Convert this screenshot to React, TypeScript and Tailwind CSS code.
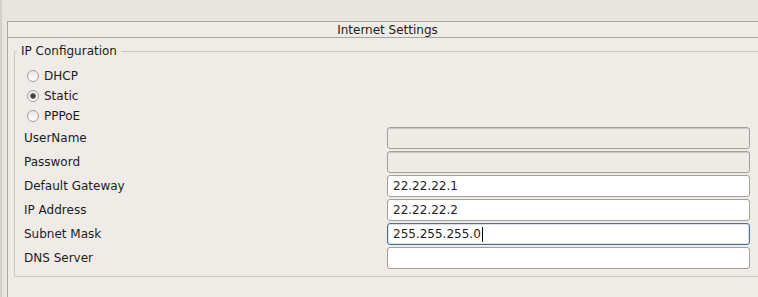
import React from 'react';

// --- Radio option ---
interface RadioProps {
  label: string;
  checked?: boolean;
}

const Radio: React.FC<RadioProps> = ({ label, checked }) => (
  <div className="flex items-center h-[20px] pl-[12px]">
    <span className="w-[12px] h-[12px] rounded-full border border-[#a29f9b] bg-gradient-to-b from-[#e9e6e2] to-white flex items-center justify-center">
      {checked && <span className="w-[6px] h-[6px] rounded-full bg-[#3c3c3c] border border-[#6b6b6b]" />}
    </span>
    <span className="ml-[5px]">{label}</span>
  </div>
);

// --- Labelled text field ---
interface FieldProps {
  label: string;
  value?: string;
  disabled?: boolean;
  focused?: boolean;
}

const Field: React.FC<FieldProps> = ({ label, value = '', disabled, focused }) => (
  <div className="flex items-center h-[24px]">
    <div className="w-[372px] pl-[9px]">{label}</div>
    <div
      className={`
        w-[363px] h-[22px] rounded-[3px] border flex items-center pl-[5px]
        ${disabled
          ? 'bg-[#eeebe7] border-[#a3a09c] shadow-[inset_0_1px_0_#c9c6c2]'
          : focused
            ? 'bg-white border-[#4f7191] shadow-[inset_0_0_0_1px_#d5e0ea]'
            : 'bg-white border-[#a3a09c]'}
      `}
    >
      {value}
      {focused && <span className="w-px h-[15px] bg-black ml-[1px]" />}
    </div>
  </div>
);

export default function App() {
  return (
    <div
      className="w-[758px] h-[297px] overflow-hidden bg-[#e8e5e1] flex text-[12px] text-[#1c1c1c]"
      style={{ fontFamily: '"DejaVu Sans", "Liberation Sans", sans-serif' }}
    >
      {/* left window edge */}
      <div className="w-[2px] shrink-0 bg-[#d3cfca]" />

      <div className="flex flex-col flex-1 min-w-0">
        <div className="h-[21px] shrink-0" />

        {/* Settings panel */}
        <div className="ml-[5px] w-[760px] flex-1 border-l border-t border-[#a9a5a1] bg-[#efece8] flex flex-col">
          <div className="h-[16px] shrink-0 border-b border-[#a9a5a1] flex items-center justify-center leading-none">
            Internet Settings
          </div>

          <div className="pt-[6px] pl-[6px]">
            <fieldset className="border border-[#cbc7c2] rounded-[2px] pb-[6px]">
              <legend className="ml-[2px] px-[4px] leading-[14px]">IP Configuration</legend>

              <div className="pt-[8px]">
                <Radio label="DHCP" />
                <Radio label="Static" checked />
                <Radio label="PPPoE" />
              </div>

              <div>
                <Field label="UserName" disabled />
                <Field label="Password" disabled />
                <Field label="Default Gateway" value="22.22.22.1" />
                <Field label="IP Address" value="22.22.22.2" />
                <Field label="Subnet Mask" value="255.255.255.0" focused />
                <Field label="DNS Server" />
              </div>
            </fieldset>
          </div>
        </div>
      </div>
    </div>
  );
}
